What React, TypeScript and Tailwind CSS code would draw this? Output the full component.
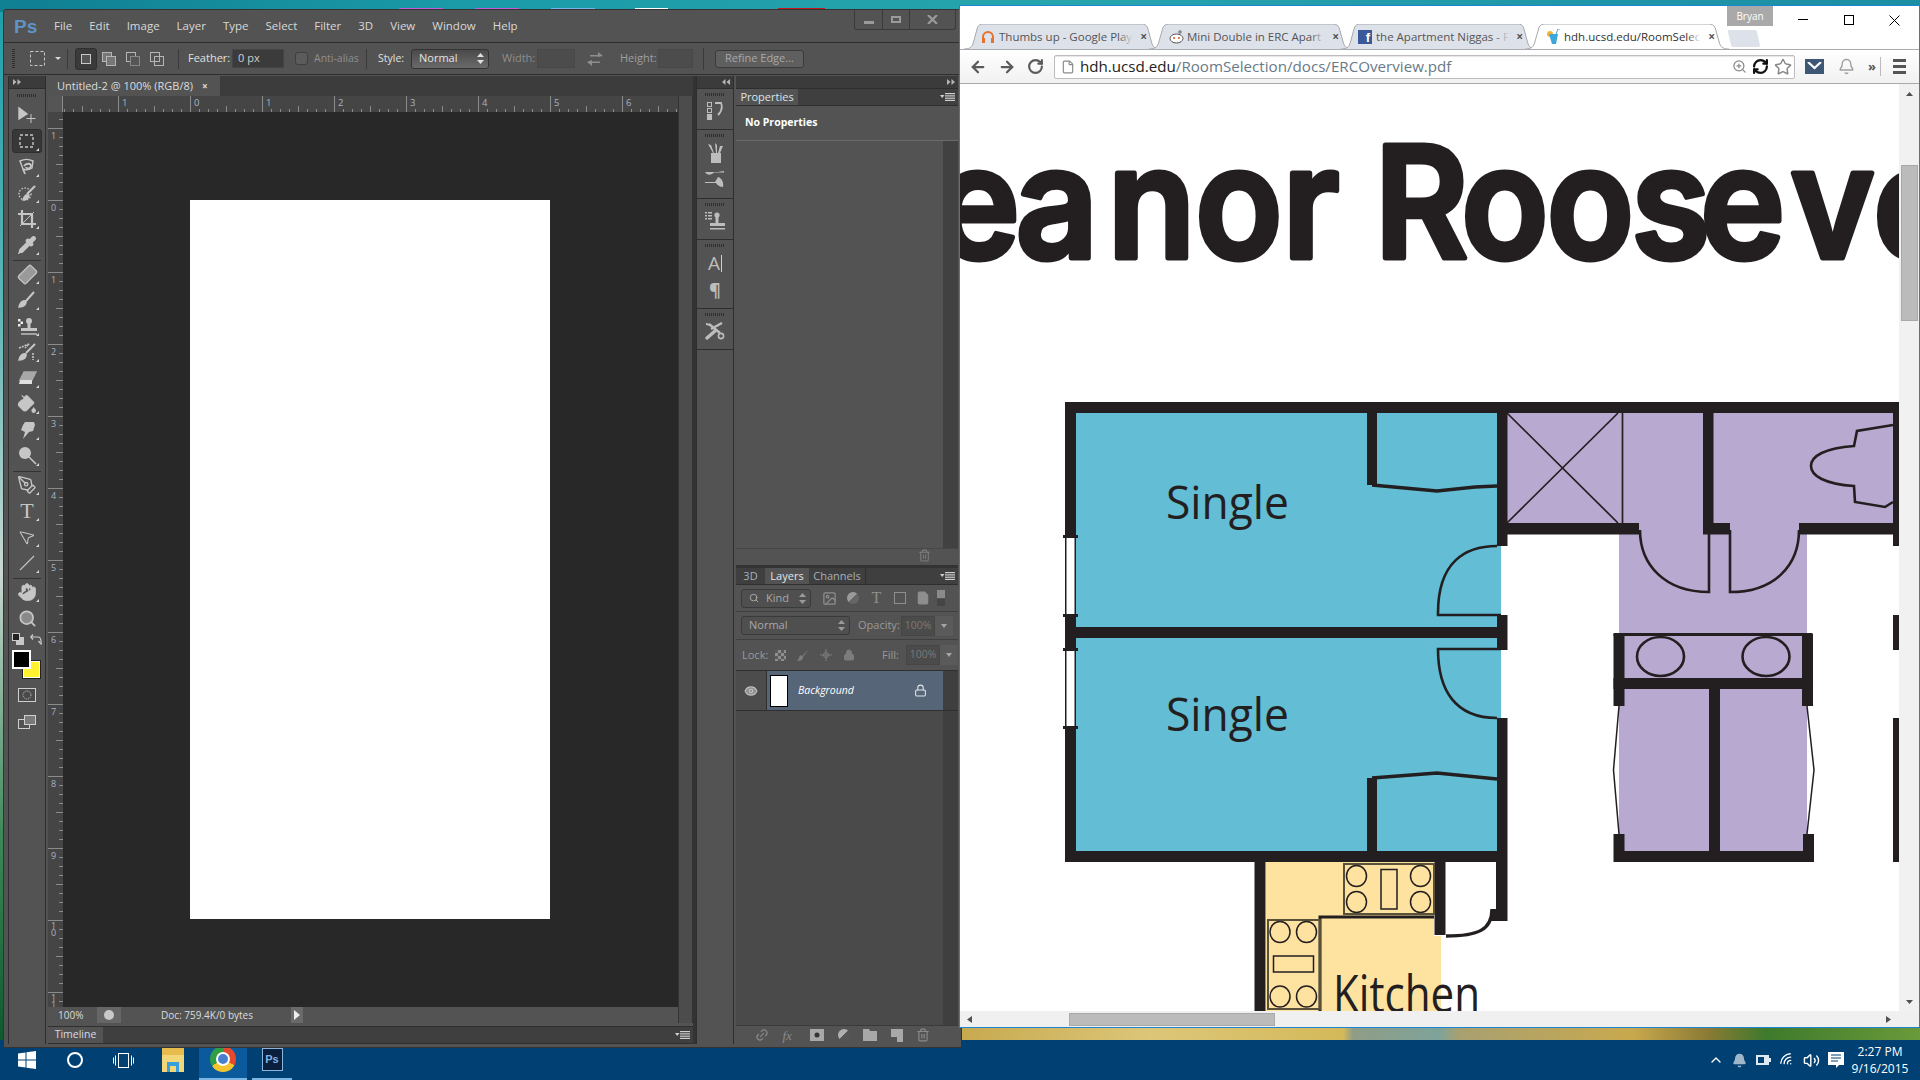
import React from "react";
import {
  ArrowLeft,
  ArrowRight,
  Bandage,
  Bell,
  ChevronUp,
  Eye,
  File,
  Hand,
  Image as ImageIcon,
  Link2,
  Lock,
  MousePointer2,
  PaintBucket,
  PenTool,
  Pipette,
  RefreshCw,
  RotateCw,
  Search,
  Star,
  Trash2,
  Volume2,
  Wifi,
  ZoomIn,
} from "lucide-react";

const MENUS = ["File", "Edit", "Image", "Layer", "Type", "Select", "Filter", "3D", "View", "Window", "Help"];

function Grip({ w = 20 }: { w?: number }) {
  return (
    <svg width={w} height="3" className="mx-auto block">
      {Array.from({ length: Math.floor(w / 2) }).map((_, i) => (
        <rect key={i} x={i * 2} y="0" width="1" height="3" fill="#2f2f2f" />
      ))}
    </svg>
  );
}

function UpDown({ color = "#bdbdbd" }: { color?: string }) {
  return (
    <svg width="7" height="11" viewBox="0 0 7 11" fill={color}>
      <path d="M3.5 0 7 4H0zM3.5 11 0 7h7z" />
    </svg>
  );
}

function DoubleArrow({ left }: { left?: boolean }) {
  return (
    <svg width="8" height="6" viewBox="0 0 8 6" fill="#b5b5b5" className={left ? "rotate-180" : ""}>
      <path d="M0 0l3.5 3L0 6zM4.5 0 8 3 4.5 6z" />
    </svg>
  );
}

function PanelMenu() {
  return (
    <svg width="15" height="8" viewBox="0 0 15 8" fill="#cfcfcf">
      <path d="M0 2h4.5L2.2 5z" />
      <rect x="5" y="0" width="10" height="1.2" />
      <rect x="5" y="2.3" width="10" height="1.2" />
      <rect x="5" y="4.6" width="10" height="1.2" />
      <rect x="5" y="6.8" width="10" height="1.2" />
    </svg>
  );
}

function Tool({ children, corner = true, active }: { children: React.ReactNode; corner?: boolean; active?: boolean }) {
  return (
    <div className="relative flex h-[26px] items-center justify-center">
      {active && <div className="absolute inset-x-[3px] inset-y-px rounded-[3px] border border-[#2e2e2e] bg-[#383838]" />}
      <div className="relative flex h-[22px] w-[22px] items-center justify-center text-[#c6c6c6]">{children}</div>
      {corner && (
        <svg width="3" height="3" className="absolute bottom-[3px] right-[6px]">
          <path d="M3 0v3H0z" fill="#d8d8d8" />
        </svg>
      )}
    </div>
  );
}

function Ic({ children }: { children: React.ReactNode }) {
  return (
    <svg width="22" height="22" viewBox="0 0 22 22" fill="none" stroke="#c6c6c6" strokeWidth="1.4">
      {children}
    </svg>
  );
}

function ToolBar() {
  return (
    <div className="w-[38px] shrink-0 border-x border-[#2e2e2e] bg-[#535353]">
      <div className="flex h-[13px] items-center border-b border-[#2e2e2e] bg-[#3b3b3b] pl-[4px]">
        <DoubleArrow />
      </div>
      <div className="flex h-[13px] items-center">
        <Grip />
      </div>
      <Tool corner={false}>
        <Ic>
          <path d="M3 4v11l8-5z" fill="#c6c6c6" />
          <path d="M15 10v9M10.5 14.5h9" strokeWidth="1" />
        </Ic>
      </Tool>
      <Tool active>
        <Ic>
          <rect x="4" y="5" width="13" height="12" strokeDasharray="3 2" />
        </Ic>
      </Tool>
      <Tool>
        <Ic>
          <path d="M4 5c4-2 9-2 13 0l-1 7c-3 2-7 2-9 1z" />
          <path d="M8 10c2-3 7-3 7 0s-5 3-5 1M7 13l2 5" fill="none" strokeWidth="1.8" />
        </Ic>
      </Tool>
      <Tool>
        <Ic>
          <circle cx="9" cy="12" r="6" strokeDasharray="1.5 1.5" />
          <path d="M19 4 11 12" strokeWidth="2.2" />
          <path d="M7 18c1-4 3-6 6-5 0 3-2 5-6 5z" fill="#c6c6c6" />
        </Ic>
      </Tool>
      <Tool>
        <Ic>
          <path d="M6 2v14h14M2 6h14v14" strokeWidth="2.2" />
          <path d="M4 18 18 4" strokeWidth="1" />
        </Ic>
      </Tool>
      <Tool>
        <Pipette size={20} fill="#c6c6c6" strokeWidth={1.4} />
      </Tool>
      <div className="mx-[4px] h-[3px] border-b border-[#333]" />
      <Tool>
        <Bandage size={21} fill="#9a9a9a" strokeWidth={1.4} className="-rotate-45" />
      </Tool>
      <Tool>
        <Ic>
          <path d="M18 3 10 12" strokeWidth="2" />
          <path d="M3 18c1-4 3-7 7-6 1 3-2 6-7 6z" fill="#c6c6c6" />
        </Ic>
      </Tool>
      <Tool>
        <Ic>
          <rect x="2" y="4" width="2.5" height="2.5" fill="#eee" stroke="none" />
          <rect x="4.5" y="6.5" width="2.5" height="2.5" fill="#eee" stroke="none" />
          <rect x="2" y="9" width="2.5" height="2.5" fill="#eee" stroke="none" />
          <circle cx="13" cy="6" r="3" fill="#c6c6c6" stroke="none" />
          <path d="M13 8v5" strokeWidth="3" />
          <path d="M5 13h16v3H5z" fill="#c6c6c6" stroke="none" />
          <path d="M5 19h16" />
        </Ic>
      </Tool>
      <Tool>
        <Ic>
          <path d="M19 3 10 12" strokeWidth="2" />
          <path d="M3 19c1-4 3-7 7-6 1 3-2 6-7 6z" fill="#c6c6c6" />
          <path d="M3 7 13 3 9 7M17 12v7" strokeWidth="1.6" strokeDasharray="2 1" />
        </Ic>
      </Tool>
      <Tool>
        <Ic>
          <path d="M8 5h12l-4 8H4z" fill="#a8a8a8" stroke="#a8a8a8" />
          <path d="M4 13h12v4H3z" fill="#e0e0e0" stroke="none" />
        </Ic>
      </Tool>
      <Tool>
        <PaintBucket size={20} fill="#c6c6c6" strokeWidth={1.4} />
      </Tool>
      <Tool>
        <Ic>
          <path d="M9 3h9l1 3-2 6-4 1-6 7 2-7-4-2 2-5z" fill="#c6c6c6" stroke="none" />
        </Ic>
      </Tool>
      <Tool>
        <Ic>
          <circle cx="9" cy="8" r="6" fill="#c6c6c6" stroke="none" />
          <path d="m13 12 7 7" strokeWidth="1.6" />
        </Ic>
      </Tool>
      <div className="mx-[4px] h-[3px] border-b border-[#333]" />
      <Tool>
        <PenTool size={20} strokeWidth={1.6} />
      </Tool>
      <Tool>
        <span className="font-['Liberation_Serif',serif] text-[22px] leading-none">T</span>
      </Tool>
      <Tool>
        <MousePointer2 size={18} strokeWidth={1.4} className="rotate-[-8deg]" />
      </Tool>
      <Tool>
        <Ic>
          <path d="M4 18 18 4" strokeWidth="1.1" />
        </Ic>
      </Tool>
      <div className="mx-[4px] h-[3px] border-b border-[#333]" />
      <Tool>
        <Hand size={20} fill="#c6c6c6" strokeWidth={1.2} />
      </Tool>
      <Tool corner={false}>
        <Search size={19} strokeWidth={2.2} fill="#8a8a8a" />
      </Tool>
      <div className="flex h-[16px] items-center justify-between px-[3px]">
        <svg width="12" height="12" viewBox="0 0 12 12">
          <rect x="4" y="4" width="8" height="8" fill="#c8c8c8" />
          <rect x="0.5" y="0.5" width="7" height="7" fill="#222" stroke="#ccc" />
        </svg>
        <svg width="12" height="12" viewBox="0 0 12 12" fill="none" stroke="#ccc" strokeWidth="1.2">
          <path d="M1 4h7c2 0 3 1 3 5M3 1.5 0.8 4 3 6.5M8.5 8l2.5 3 2-3" />
        </svg>
      </div>
      <div className="relative ml-[3px] h-[32px]">
        <div className="absolute left-[10px] top-[13px] h-[19px] w-[19px] border border-[#222] bg-[#fff22f] outline outline-1 -outline-offset-2 outline-white" />
        <div className="absolute left-[0px] top-[3px] h-[19px] w-[19px] border-2 border-white bg-black" />
      </div>
      <div className="mt-[9px] flex justify-center">
        <svg width="18" height="14" viewBox="0 0 18 14" fill="none" stroke="#cfcfcf">
          <rect x="0.5" y="0.5" width="17" height="13" fill="#4a4a4a" />
          <circle cx="9" cy="7" r="4" strokeDasharray="1 1" />
        </svg>
      </div>
      <div className="mt-[13px] flex justify-center">
        <svg width="18" height="14" viewBox="0 0 18 14" fill="none" stroke="#cfcfcf">
          <rect x="0.5" y="4.5" width="11" height="9" />
          <rect x="6.5" y="0.5" width="11" height="9" fill="#7a7a7a" />
        </svg>
      </div>
    </div>
  );
}

function TopRuler() {
  const ticks = Array.from({ length: 70 }).map((_, i) => i * 9 + 1);
  return (
    <svg width="615" height="16" className="block">
      {ticks.map((x) => {
        const fromZero = Math.round((x - 127) / 9);
        const inch = ((fromZero % 8) + 8) % 8 === 0;
        const half = ((fromZero % 4) + 4) % 4 === 0;
        return <rect key={x} x={x} y={inch ? 0 : half ? 10 : 13} width="1" height={inch ? 16 : half ? 6 : 3} fill="#8b8b8b" />;
      })}
      {[1, 0, 1, 2, 3, 4, 5, 6].map((n, i) => (
        <text key={i} x={56 + i * 72 + 3} y="10" fontSize="9.5" fill="#a6b4c4">
          {n}
        </text>
      ))}
    </svg>
  );
}

function LeftRuler() {
  const labels = ["1", "0", "1", "2", "3", "4", "5", "6", "7", "8", "9", "10", "11"];
  return (
    <svg width="15" height="896" className="block">
      {Array.from({ length: 100 }).map((_, i) => {
        const y = 16 + (i - 1) * 9;
        const inch = (i - 1) % 8 === 0;
        const half = (i - 1) % 4 === 0;
        return y < 0 ? null : <rect key={i} x={inch ? 0 : half ? 8 : 11} y={y} width={inch ? 15 : half ? 7 : 4} height="1" fill="#8b8b8b" />;
      })}
      {labels.map((l, i) => (
        <text key={i} y={16 + i * 72 + (l.length > 1 ? 9 : 11)} fontSize="9" fill="#a6b4c4">
          {l.split("").map((c, j) => (
            <tspan key={j} x="3" dy={j === 0 ? 0 : 7}>
              {c}
            </tspan>
          ))}
        </text>
      ))}
    </svg>
  );
}

function DocColumn() {
  return (
    <div className="flex min-w-0 w-[645px] shrink-0 flex-col">
      <div className="flex h-[20px] shrink-0 bg-[#3c3c3c]">
        <div className="flex w-[172px] items-center gap-[9px] bg-[#535353] pl-[9px] text-[11px] text-[#dcdcdc]">
          <span>Untitled-2 @ 100% (RGB/8)</span>
          <span className="text-[10px] font-bold leading-none">×</span>
        </div>
      </div>
      <div className="flex h-[927px] shrink-0">
        <div className="flex w-[630px] flex-col overflow-hidden">
          <div className="flex h-[16px] shrink-0 bg-[#454545]">
            <div className="w-[15px] border-r border-[#8b8b8b] bg-[#555]" />
            <TopRuler />
          </div>
          <div className="flex min-h-0 flex-1">
            <div className="w-[15px] shrink-0 overflow-hidden bg-[#454545]">
              <LeftRuler />
            </div>
            <div className="min-w-0 flex-1 overflow-hidden bg-[#282828] pl-[127px] pt-[88px]">
              <div className="h-[719px] w-[360px] bg-white" />
            </div>
          </div>
          <div className="flex h-[16px] shrink-0 items-center bg-[#535353] text-[10px] text-[#dcdcdc]">
            <span className="w-[49px] pl-[10px]">100%</span>
            <div className="flex h-full w-[24px] items-center justify-center bg-[#666]">
              <div className="h-[10px] w-[10px] rounded-full bg-[#c8c8c8]" />
            </div>
            <span className="w-[170px] pl-[40px]">Doc: 759.4K/0 bytes</span>
            <div className="flex h-full w-[12px] items-center justify-center bg-[#6a6a6a]">
              <svg width="6" height="10">
                <path d="M0 0l6 5-6 5z" fill="#eee" />
              </svg>
            </div>
          </div>
        </div>
        <div className="w-[15px] border-x border-[#333] bg-[#4c4c4c]" />
      </div>
      <div className="mt-[3px] flex h-[18px] shrink-0 items-stretch border-y border-[#2f2f2f] bg-[#3f3f3f]">
        <div className="flex w-[55px] items-center justify-center bg-[#535353] text-[10.5px] text-[#d4dce4]">Timeline</div>
        <div className="flex flex-1 items-center justify-end pr-[3px]">
          <PanelMenu />
        </div>
      </div>
    </div>
  );
}

function DockGroup({ children, h }: { children: React.ReactNode; h: number }) {
  return (
    <div className={`border-b border-[#2e2e2e] pt-[4px] ${h === 40 ? "h-[41px]" : "h-[69px]"}`}>
      <Grip />
      <div className="flex flex-col items-center gap-[7px] pt-[6px] text-[#bdbdbd]">{children}</div>
    </div>
  );
}

function Dock() {
  return (
    <div className="w-[38px] shrink-0 border-x border-[#2e2e2e] bg-[#535353]">
      <div className="flex h-[13px] items-center justify-end border-b border-[#2e2e2e] bg-[#3b3b3b] pr-[3px]">
        <DoubleArrow left />
      </div>
      <DockGroup h={40}>
        <svg width="16" height="18" viewBox="0 0 16 18" fill="none" stroke="#bdbdbd">
          <rect x="0.5" y="0.5" width="4" height="4" />
          <rect x="0.5" y="6.5" width="4" height="4" />
          <rect x="0.5" y="12.5" width="4" height="5" fill="#bdbdbd" />
          <path d="M8 1h6c2 5 0 9-3 12" strokeWidth="1.8" />
        </svg>
      </DockGroup>
      <DockGroup h={69}>
        <svg width="18" height="20" viewBox="0 0 18 20" fill="#bdbdbd">
          <rect x="5" y="10" width="10" height="10" />
          <path d="M7 10 2 1l3 1 3 8zM10 10 9 0l2 2 0 8zM12 10l2-7 3 0-3 7z" />
        </svg>
        <svg width="20" height="18" viewBox="0 0 20 18" fill="#bdbdbd">
          <path d="M0 2h9c3 0 5 0 10-1v1.5H9C5 6 2 5 0 2zM0 12h10l3-5c4 1 6 6 5 10-3 0-6-2-7-4H0z" />
        </svg>
      </DockGroup>
      <DockGroup h={40}>
        <svg width="20" height="18" viewBox="0 0 20 18" fill="#bdbdbd">
          <path d="M0 0h2v1.4H0zM0 3h2v1.4H0zM0 6h2v1.4H0zM3 0h4v1.4H3zM3 3h4v1.4H3zM3 6h4v1.4H3z" />
          <circle cx="12" cy="3" r="2.6" />
          <rect x="10.5" y="4" width="3" height="7" />
          <rect x="5" y="11" width="15" height="3" />
          <rect x="5" y="16" width="15" height="1.5" />
        </svg>
      </DockGroup>
      <DockGroup h={69}>
        <span className="flex h-[20px] items-center text-[19px] leading-none text-[#bdbdbd]">
          A<span className="ml-px inline-block h-[17px] w-px bg-[#cfcfcf]" />
        </span>
        <span className="flex h-[20px] items-center text-[18px] font-bold leading-none text-[#bdbdbd]">¶</span>
      </DockGroup>
      <DockGroup h={40}>
        <svg width="20" height="18" viewBox="0 0 20 18" fill="none" stroke="#bdbdbd">
          <path d="M6 7 17 1M4 2 15 11" strokeWidth="2.4" />
          <path d="M1 2c2 0 3 1 4 1" strokeWidth="2" />
          <path d="M10 9 2 16" strokeWidth="3.4" strokeLinecap="round" />
          <circle cx="16" cy="14" r="2.6" strokeWidth="1.6" />
        </svg>
      </DockGroup>
    </div>
  );
}

function PsSelect({ className, label, muted }: { className: string; label: React.ReactNode; muted?: boolean }) {
  return (
    <div className={`flex items-center justify-between rounded-[3px] border border-[#3a3a3a] bg-[#4f4f4f] pl-[7px] pr-[4px] text-[11px] ${muted ? "text-[#a8a8a8]" : "text-[#d8d8d8]"} ${className}`}>
      {label}
      <UpDown color={muted ? "#9a9a9a" : "#cfcfcf"} />
    </div>
  );
}

function PercentBox() {
  return (
    <div className="flex h-[20px]">
      <div className="flex w-[34px] items-center justify-center border border-[#464646] bg-[#4b4b4b] text-[10.5px] text-[#7a7a7a]">100%</div>
      <div className="flex w-[18px] items-center justify-center bg-[#5a5a5a]">
        <svg width="6" height="4">
          <path d="M0 0h6L3 4z" fill="#a5a5a5" />
        </svg>
      </div>
    </div>
  );
}

function Panels() {
  return (
    <div className="flex w-[222px] shrink-0 flex-col bg-[#535353]">
      <div className="flex h-[13px] shrink-0 items-center justify-end border-b border-[#2e2e2e] bg-[#3b3b3b] pr-[3px]">
        <DoubleArrow />
      </div>
      <div className="flex h-[17px] shrink-0 border-b border-[#2f2f2f] bg-[#3f3f3f]">
        <div className="flex w-[62px] items-center justify-center bg-[#535353] text-[11px] text-[#dbe3ea]">Properties</div>
        <div className="flex flex-1 items-center justify-end pr-[3px]">
          <PanelMenu />
        </div>
      </div>
      <div className="flex h-[35px] shrink-0 items-center border-b border-[#6a6a6a] pl-[9px] text-[10.5px] font-bold text-white">No Properties</div>
      <div className="flex h-[407px] shrink-0">
        <div className="flex-1" />
        <div className="w-[15px] bg-[#414141]" />
      </div>
      <div className="flex h-[17px] shrink-0 items-start justify-end border-t border-[#474747] pr-[27px]">
        <Trash2 size={13} color="#7c7c7c" />
      </div>
      <div className="h-[3px] shrink-0 bg-[#333]" />
      <div className="flex h-[17px] shrink-0 border-b border-[#2f2f2f] bg-[#3f3f3f] text-[11px] text-[#a7b0b8]">
        <div className="flex w-[29px] items-center justify-center">3D</div>
        <div className="flex w-[44px] items-center justify-center bg-[#535353] text-[#e0e6ea]">Layers</div>
        <div className="flex w-[57px] items-center justify-center border-r border-[#2f2f2f]">Channels</div>
        <div className="flex flex-1 items-center justify-end pr-[3px]">
          <PanelMenu />
        </div>
      </div>
      <div className="flex h-[27px] shrink-0 items-center border-b border-[#3f3f3f] pl-[5px] text-[#8e8e8e]">
        <PsSelect
          className="h-[19px] w-[70px]"
          muted
          label={
            <span className="flex items-center gap-[7px]">
              <Search size={10} strokeWidth={2.4} />
              Kind
            </span>
          }
        />
        <div className="ml-[11px] flex items-center gap-[10px]">
          <ImageIcon size={15} />
          <div className="h-[12px] w-[12px] rounded-full bg-[linear-gradient(135deg,#9a9a9a_50%,#666_50%)]" />
          <span className="w-[15px] text-center font-['Liberation_Serif',serif] text-[16px] leading-none">T</span>
          <div className="h-[12px] w-[12px] border border-[#8e8e8e]" />
          <File size={14} fill="#8e8e8e" />
        </div>
        <div className="ml-[7px] flex h-[16px] w-[8px] flex-col gap-px">
          <div className="flex-1 bg-[#8a8a8a]" />
          <div className="flex-1 bg-[#454545]" />
        </div>
      </div>
      <div className="flex h-[28px] shrink-0 items-center border-b border-[#3f3f3f] pl-[5px] text-[11px] text-[#9a9a9a]">
        <PsSelect className="h-[19px] w-[109px]" muted label="Normal" />
        <span className="ml-[8px] w-[43px]">Opacity:</span>
        <PercentBox />
      </div>
      <div className="flex h-[31px] shrink-0 items-center border-b border-[#2f2f2f] pl-[6px] text-[11px] text-[#9a9a9a]">
        <span className="w-[33px]">Lock:</span>
        <div className="flex items-center gap-[11px] text-[#7c7c7c]">
          <div className="h-[11px] w-[11px] bg-[repeating-conic-gradient(#8e8e8e_0_25%,#5a5a5a_0_50%)] bg-[length:6px_6px]" />
          <svg width="12" height="12" viewBox="0 0 12 12" fill="#7c7c7c">
            <path d="M12 0 5 7 3 6C2 8 2 10 0 12c4 0 6-1 6-4z" />
          </svg>
          <svg width="12" height="12" viewBox="0 0 12 12" fill="none" stroke="#7c7c7c">
            <path d="M6 0v12M0 6h12" />
            <circle cx="6" cy="6" r="2.5" />
          </svg>
          <Lock size={12} fill="#7c7c7c" />
        </div>
        <span className="ml-auto mr-[7px]">Fill:</span>
        <PercentBox />
      </div>
      <div className="flex h-[40px] shrink-0 border-b border-[#2f2f2f]">
        <div className="flex w-[31px] items-center justify-center border-r border-[#2f2f2f] bg-[#4c4c4c]">
          <Eye size={14} color="#c0c0c0" fill="#8f8f8f" />
        </div>
        <div className="flex w-[176px] items-center bg-[#576578] pl-[3px] text-white">
          <div className="h-[32px] w-[18px] border border-black bg-white" />
          <span className="ml-[10px] text-[10.5px] italic">Background</span>
          <Lock size={13} color="#dfe4ea" className="ml-auto mr-[16px]" />
        </div>
        <div className="flex-1 bg-[#3f3f3f]" />
      </div>
      <div className="flex min-h-0 flex-1">
        <div className="flex-1 bg-[#4a4a4a]" />
        <div className="w-[15px] bg-[#3f3f3f]" />
      </div>
      <div className="flex h-[19px] shrink-0 items-center gap-[13.5px] border-t border-[#3a3a3a] pl-[19px] text-[#8a8a8a]">
        <Link2 size={14} className="-rotate-45" />
        <span className="w-[14px] font-['Liberation_Serif',serif] text-[13px] italic leading-none">fx</span>
        <svg width="14" height="12">
          <rect width="14" height="12" fill="#a8a8a8" />
          <circle cx="7" cy="6" r="2.5" fill="#333" />
        </svg>
        <div className="h-[12px] w-[12px] rounded-full bg-[linear-gradient(135deg,#b0b0b0_50%,#555_50%)]" />
        <svg width="14" height="12">
          <path d="M0 0h6l1 2h7v10H0z" fill="#a8a8a8" />
        </svg>
        <svg width="12" height="13">
          <path d="M0 0h12v13H6V8H0z" fill="#a8a8a8" />
        </svg>
        <Trash2 size={14} />
      </div>
    </div>
  );
}

function OptionsBar() {
  return (
    <div className="flex h-[33px] shrink-0 items-center border-y border-[#2e2e2e] bg-[#535353] text-[11px]">
      <div className="ml-[8px] h-[20px] w-[3px] bg-[repeating-linear-gradient(#2f2f2f_0_1px,transparent_1px_2px)]" />
      <svg width="16" height="15" className="ml-[15px]" fill="none" stroke="#c8c8c8" strokeDasharray="3 2">
        <rect x="0.5" y="0.5" width="14" height="14" />
      </svg>
      <svg width="6" height="3" className="ml-[9px]">
        <path d="M0 0h6L3 3z" fill="#d8d8d8" />
      </svg>
      <div className="ml-[6px] h-[20px] w-px bg-[#3a3a3a]" />
      <div className="ml-[7px] flex h-[22px] w-[22px] items-center justify-center rounded-[3px] border border-[#2f2f2f] bg-[#3a3a3a]">
        <div className="h-[10px] w-[10px] border border-[#c8c8c8] bg-[#555]" />
      </div>
      <svg width="14" height="14" className="ml-[5px]" fill="none" stroke="#b5b5b5">
        <rect x="0.5" y="0.5" width="9" height="9" fill="#777" />
        <rect x="4.5" y="4.5" width="9" height="9" fill="#777" />
      </svg>
      <svg width="14" height="14" className="ml-[10px]" fill="none" stroke="#b5b5b5">
        <rect x="0.5" y="0.5" width="9" height="9" />
        <rect x="4.5" y="4.5" width="9" height="9" fill="#555" stroke="#888" />
      </svg>
      <svg width="14" height="14" className="ml-[10px]" fill="none" stroke="#b5b5b5">
        <rect x="0.5" y="0.5" width="9" height="9" />
        <rect x="4.5" y="4.5" width="9" height="9" />
      </svg>
      <div className="ml-[14px] h-[20px] w-px bg-[#3a3a3a]" />
      <span className="ml-[9px] w-[44px] text-[#e0e0e0]">Feather:</span>
      <div className="flex h-[19px] w-[52px] items-center border border-[#454545] bg-[#3b3b3b] pl-[5px] text-[#cfcfcf]">0 px</div>
      <div className="ml-[11px] h-[13px] w-[13px] rounded-[3px] border border-[#3f3f3f] bg-[#5c5c5c]" />
      <span className="ml-[6px] w-[52px] text-[10.5px] text-[#8e8e8e]">Anti-alias</span>
      <div className="h-[20px] w-px bg-[#3a3a3a]" />
      <span className="ml-[11px] w-[33px] text-[10.5px] text-[#e0e0e0]">Style:</span>
      <div className="flex h-[20px] w-[78px] items-center justify-between rounded-[3px] border border-[#333] bg-[linear-gradient(#4a4a4a,#6a6a6a)] px-[7px] pr-[4px] text-[#e4e4e4]">
        Normal
        <UpDown color="#e0e0e0" />
      </div>
      <span className="ml-[13px] w-[35px] text-[#8e8e8e]">Width:</span>
      <div className="h-[19px] w-[38px] border border-[#484848] bg-[#4c4c4c]" />
      <svg width="16" height="14" viewBox="0 0 16 14" fill="#8e8e8e" className="ml-[12px]">
        <path d="M3 3h8V0l5 4-5 1V4.5H3zM13 9.5H5V8L0 10l5 4v-3h8z" />
      </svg>
      <span className="ml-[17px] w-[38px] text-[#9e9e9e]">Height:</span>
      <div className="h-[19px] w-[35px] border border-[#484848] bg-[#4c4c4c]" />
      <div className="ml-[10px] h-[22px] w-px bg-[#3a3a3a]" />
      <div className="ml-[11px] flex h-[18px] w-[89px] items-center justify-center rounded-[3px] border border-[#3a3a3a] bg-[#5f5f5f] text-[#a8a8a8]">Refine Edge...</div>
    </div>
  );
}

function PhotoshopWindow() {
  return (
    <div className="absolute left-[3px] top-[9px] z-10 flex h-[1039px] w-[959px] flex-col rounded-tl-[3px] border border-[#333] bg-[#535353] pb-[3px]">
      <div className="flex h-[32px] shrink-0 items-start justify-between">
        <div className="flex h-full items-center text-[11.5px] text-[#d8d8d8]">
          <span className="ml-[10px] w-[40px] font-['Liberation_Sans',sans-serif] text-[19px] font-bold leading-none text-[#5f93c7]">Ps</span>
          <div className="flex gap-[17px]">
            {MENUS.map((m) => (
              <span key={m}>{m}</span>
            ))}
          </div>
        </div>
        <div className="mr-[5px] flex h-[20px] w-[102px] rounded-b-[3px] border border-t-0 border-[#3a3a3a]">
          <div className="flex w-[28px] items-end justify-center border-r border-[#3a3a3a] pb-[5px]">
            <div className="h-[3px] w-[10px] bg-[#9a9a9a]" />
          </div>
          <div className="flex w-[27px] items-center justify-center border-r border-[#3a3a3a]">
            <div className="h-[7px] w-[10px] border-2 border-[#9a9a9a]" />
          </div>
          <div className="flex flex-1 items-center justify-center">
            <svg width="11" height="9" viewBox="0 0 11 9" stroke="#9a9a9a" strokeWidth="2.2">
              <path d="M1 0l9 9M10 0 1 9" />
            </svg>
          </div>
        </div>
      </div>
      <OptionsBar />
      <div className="flex min-h-0 flex-1 pl-[4px] pr-[3px] pt-px">
        <ToolBar />
        <div className="w-[2px] shrink-0" />
        <DocColumn />
        <div className="w-[3px] shrink-0 bg-[#333]" />
        <Dock />
        <div className="w-[2px] shrink-0" />
        <Panels />
      </div>
    </div>
  );
}

function ChromeTab({ title, icon, active, className }: { title: string; icon: React.ReactNode; active?: boolean; className: string }) {
  return (
    <div className={`relative flex h-[25px] items-center pr-[14px] ${className} ${active ? "z-10" : ""}`}>
      <svg viewBox="0 0 192 25" preserveAspectRatio="none" className="absolute inset-0 h-full w-full">
        <path
          d="M0 25c7 0 8-3 9-6L13 4c1-3 3-4 6-4h154c3 0 5 1 6 4l4 15c1 3 2 6 9 6"
          fill={active ? "#ffffff" : "#dde1e9"}
          stroke="#a7a9ac"
          vectorEffect="non-scaling-stroke"
        />
      </svg>
      <div className="relative flex h-[16px] w-[16px] shrink-0 items-center justify-center">{icon}</div>
      <div className="relative ml-[3px] min-w-0 flex-1 overflow-hidden whitespace-nowrap text-[11.5px] leading-[14px] text-[#555]">
        <span className={active ? "text-[#333]" : ""}>{title}</span>
        <div className={`absolute inset-y-0 right-0 w-[14px] ${active ? "bg-gradient-to-r from-transparent to-white" : "bg-gradient-to-r from-transparent to-[#dde1e9]"}`} />
      </div>
      <span className="relative ml-[7px] text-[12px] font-bold leading-none text-[#555]">×</span>
    </div>
  );
}

function FloorPlan() {
  const wall = "#231f20";
  const blue = "#63bdd4";
  const purple = "#b8a9d0";
  const yellow = "#fde2a0";
  return (
    <svg viewBox="960 84 939 927" width="939" height="927" className="block shrink-0">
      <g transform="translate(0 258) scale(0.93 1)" fontFamily="Inter, sans-serif" fontWeight="600" fontSize="155" fill={wall} stroke={wall} strokeWidth="5" strokeLinejoin="round">
        <text x={[1005, 1092, 1191, 1285, 1379].join(" ")}>eanor</text>
        <text x={[1478, 1571, 1663, 1754, 1828, 1925, 2014].join(" ")}>Rooseve</text>
      </g>

      {/* rooms */}
      <path d="M1076 413H1497V546H1501V615H1497V627H1076Z" fill={blue} />
      <path d="M1076 638H1497V650H1501V718H1497V851H1076Z" fill={blue} />
      <rect x="1507" y="413" width="196" height="110" fill={purple} />
      <rect x="1713" y="413" width="180" height="110" fill={purple} />
      <rect x="1619" y="523" width="188" height="112" fill={purple} />
      <rect x="1619" y="636" width="188" height="215" fill={purple} />
      <path d="M1266 862H1434V936H1441V1011H1266Z" fill={yellow} />

      {/* walls */}
      <g fill={wall}>
        <rect x="1065" y="402" width="834" height="11" />
        <rect x="1065" y="402" width="11" height="133" />
        <rect x="1063" y="535" width="15" height="3" />
        <rect x="1065" y="538" width="1.5" height="77" />
        <rect x="1074.5" y="538" width="1.5" height="77" />
        <rect x="1063" y="614" width="15" height="3" />
        <rect x="1065" y="617" width="11" height="33" />
        <rect x="1063" y="648" width="15" height="3" />
        <rect x="1065" y="651" width="1.5" height="75" />
        <rect x="1074.5" y="651" width="1.5" height="75" />
        <rect x="1063" y="726" width="15" height="3" />
        <rect x="1065" y="729" width="11" height="133" />
        <rect x="1065" y="627" width="442" height="11" />
        <rect x="1065" y="851" width="442" height="11" />
        <rect x="1497" y="402" width="10.5" height="144" />
        <rect x="1497" y="615" width="10.5" height="35" />
        <rect x="1497" y="718" width="10.5" height="144" />
        <rect x="1367" y="413" width="10" height="72" />
        <rect x="1367" y="778" width="10" height="73" />
        <rect x="1497" y="523" width="142" height="11.5" />
        <rect x="1703" y="402" width="10.5" height="132" />
        <rect x="1703" y="523" width="27" height="11.5" />
        <rect x="1799" y="523" width="94" height="11.5" />
        <rect x="1893" y="402" width="6" height="144" />
        <rect x="1893" y="615" width="6" height="35" />
        <rect x="1893" y="718" width="6" height="144" />
        <rect x="1613.5" y="634" width="11" height="72" />
        <rect x="1802" y="634" width="11" height="72" />
        <rect x="1613.5" y="633" width="199" height="3" />
        <rect x="1613.5" y="678" width="199" height="11" />
        <rect x="1709" y="689" width="11" height="162" />
        <rect x="1613.5" y="851" width="200.5" height="11" />
        <rect x="1613.5" y="834" width="11" height="17" />
        <rect x="1803" y="834" width="11" height="17" />
        <rect x="1254.5" y="862" width="11" height="149" />
        <rect x="1434.5" y="862" width="11" height="73" />
        <rect x="1496" y="862" width="11.5" height="59" />
        <rect x="1491" y="909" width="16" height="12" />
      </g>

      {/* door swings and fixtures */}
      <g fill="none" stroke={wall} strokeWidth="2.6">
        <path d="M1372 485 1437 491 1475 487 1497 486" strokeWidth="3.4" />
        <path d="M1372 778 1437 773 1497 779" strokeWidth="3.4" />
        <path d="M1497 546C1465 546 1438 562 1438 613V615H1501" />
        <path d="M1501 649H1438C1438 690 1455 718 1497 718" />
        <path d="M1640 530C1640 565 1665 592 1709 592V534" />
        <path d="M1799 530C1799 565 1775 592 1730 592V530" />
        <path d="M1893 425 1857 431 1854 446C1825 448 1811 456 1811 466S1825 484 1854 486L1855 502 1885 507 1893 502" />
        <path d="M1507 413 1618 523M1618 413 1507 523M1622.5 413V523" strokeWidth="1.7" />
        <ellipse cx="1660.5" cy="656.5" rx="23.5" ry="19.5" />
        <ellipse cx="1766" cy="656.5" rx="23.5" ry="19.5" />
        <path d="M1619 706 1613.5 770 1619 834M1807 706 1814 770 1807 834" strokeWidth="1.5" />
        <path d="M1446 936C1478 936 1492 930 1492 909" strokeWidth="3.4" />
        <path d="M1434 917H1320V1011" strokeWidth="3" />
      </g>
      <g fill="none" stroke={wall} strokeWidth="1.5">
        <rect x="1344" y="864" width="90" height="50" stroke="#5a5238" strokeWidth="2" />
        <ellipse cx="1356.5" cy="876" rx="10" ry="10.5" />
        <ellipse cx="1356.5" cy="902" rx="10" ry="10.5" />
        <ellipse cx="1420.5" cy="876" rx="10" ry="10.5" />
        <ellipse cx="1420.5" cy="902" rx="10" ry="10.5" />
        <rect x="1381" y="869.5" width="16" height="39.5" />
        <rect x="1268" y="920" width="52" height="89" stroke="#5a5238" strokeWidth="2" />
        <ellipse cx="1280" cy="932" rx="10" ry="10.5" />
        <ellipse cx="1306.5" cy="932" rx="10" ry="10.5" />
        <ellipse cx="1280" cy="996.5" rx="10" ry="10.5" />
        <ellipse cx="1306.5" cy="996.5" rx="10" ry="10.5" />
        <rect x="1273.5" y="956" width="40" height="16" />
      </g>
      <g fontFamily="'Open Sans', sans-serif" fill={wall}>
        <text x="1166" y="519" fontSize="46" textLength="123" lengthAdjust="spacingAndGlyphs">Single</text>
        <text x="1166" y="731" fontSize="46" textLength="123" lengthAdjust="spacingAndGlyphs">Single</text>
        <text x="1333" y="1012" fontSize="52" textLength="147" lengthAdjust="spacingAndGlyphs">Kitchen</text>
      </g>
    </svg>
  );
}

function ChromeWindow() {
  return (
    <div className="absolute left-[959px] top-[5px] z-20 flex h-[1023px] w-[961px] flex-col overflow-hidden border-x border-y border-[#1a86d0] bg-white">
      <div className="relative h-[43px] shrink-0">
        <div className="absolute left-[767px] top-0 flex h-[20px] w-[46px] items-center justify-center bg-[#a9a9a9] text-[10px] text-white">Bryan</div>
        <div className="absolute left-[838px] top-[13px] h-px w-[10px] bg-black" />
        <div className="absolute left-[884px] top-[9px] h-[10px] w-[10px] border border-black" />
        <svg width="11" height="11" className="absolute left-[929px] top-[9px]" stroke="black">
          <path d="M0.5 0.5l10 10M10.5 0.5l-10 10" />
        </svg>
        <div className="absolute bottom-0 left-[4px] flex">
          <ChromeTab
            className="w-[197px] pl-[16px]"
            title="Thumbs up - Google Play"
            icon={
              <svg width="14" height="14" viewBox="0 0 14 14" fill="none" stroke="#e5722d" strokeWidth="2">
                <path d="M2 10V7a5 5 0 0 1 10 0v3" />
                <rect x="1" y="8" width="3" height="5" fill="#e5722d" stroke="none" />
                <rect x="10" y="8" width="3" height="5" fill="#e5722d" stroke="none" />
              </svg>
            }
          />
          <ChromeTab
            className="-ml-[12px] w-[204px] pl-[19px]"
            title="Mini Double in ERC Apart"
            icon={
              <svg width="15" height="14" viewBox="0 0 15 14">
                <ellipse cx="7.5" cy="8.5" rx="6.5" ry="4.5" fill="#fff" stroke="#555" />
                <circle cx="5" cy="8" r="1" fill="#e5501e" />
                <circle cx="10" cy="8" r="1" fill="#e5501e" />
                <circle cx="11" cy="2" r="1.2" fill="#fff" stroke="#555" />
              </svg>
            }
          />
          <ChromeTab
            className="-ml-[12px] w-[196px] pl-[16px]"
            title="the Apartment Niggas - F"
            icon={
              <div className="flex h-[14px] w-[14px] items-end justify-end bg-[#3b5998] pr-[2px] font-['Liberation_Sans',sans-serif] text-[13px] font-bold leading-none text-white">f</div>
            }
          />
          <ChromeTab
            active
            className="-ml-[12px] w-[204px] pl-[20px]"
            title="hdh.ucsd.edu/RoomSelec"
            icon={
              <svg width="15" height="15" viewBox="0 0 15 15">
                <circle cx="4" cy="5" r="3" fill="#f6b530" />
                <path d="M3 5h9l-2 10H6z" fill="#3da7dc" />
                <path d="M10 5l2-5h2" stroke="#3da7dc" fill="none" />
              </svg>
            }
          />
          <svg width="33" height="17" viewBox="0 0 33 17" className="-ml-[1px] mt-[6px]">
            <path d="M1 0h25c2 0 3 1 3 2l3 13c0 1-1 2-2 2H6c-2 0-3-1-3-2L0 2c0-1 0-2 1-2z" fill="#dde1e9" />
          </svg>
        </div>
      </div>
      <div className="flex h-[35px] shrink-0 items-center border-y border-[#a9abae] bg-[linear-gradient(#ffffff,#f1f1f1)] pl-[9px] text-[#5a5a5a]">
        <ArrowLeft size={18} strokeWidth={3} />
        <ArrowRight size={18} strokeWidth={3} className="ml-[11px]" />
        <RotateCw size={17} strokeWidth={3} className="ml-[11px]" />
        <div className="ml-[10px] flex h-[24px] w-[741px] items-center rounded-[2px] border border-[#bdbdbd] bg-white pl-[6px] pr-[2px] shadow-[inset_0_1px_1px_#e5e5e5]">
          <File size={14} color="#8a8a8a" />
          <span className="ml-[5px] text-[15.15px] leading-none">
            <span className="text-[#222]">hdh.ucsd.edu</span>
            <span className="text-[#687a88]">/RoomSelection/docs/ERCOverview.pdf</span>
          </span>
          <ZoomIn size={15} color="#888" className="ml-auto" />
          <RefreshCw size={17} color="#111" strokeWidth={3.2} className="ml-[5px]" />
          <Star size={18} color="#888" className="ml-[5px]" />
        </div>
        <div className="ml-[10px] flex h-[15px] w-[19px] items-center justify-center bg-[#3f5777]">
          <svg width="15" height="10" viewBox="0 0 15 10" fill="none" stroke="white" strokeWidth="2.2">
            <path d="M1 0l6.5 6L14 0" />
          </svg>
        </div>
        <Bell size={17} color="#a0a0a0" className="ml-[14px]" />
        <span className="ml-[13px] text-[13px] font-bold leading-none text-[#555]">»</span>
        <div className="ml-[4px] h-[19px] w-px bg-[#bbb]" />
        <div className="ml-[12px] flex w-[13px] flex-col gap-[3px]">
          <div className="h-[3px] bg-[#555]" />
          <div className="h-[3px] bg-[#555]" />
          <div className="h-[3px] bg-[#555]" />
        </div>
      </div>
      <div className="flex min-h-0 flex-1">
        <FloorPlan />
        <div className="flex w-[20px] shrink-0 flex-col items-center bg-[#f1f1f1]">
          <svg width="7" height="4" className="mt-[8px]">
            <path d="M3.5 0 7 4H0z" fill="#505050" />
          </svg>
          <div className="mt-[69px] h-[156px] w-[17px] border border-[#a9a9a9] bg-[#bbbbbb]" />
          <svg width="7" height="4" className="mb-[7px] mt-auto">
            <path d="M0 0h7L3.5 4z" fill="#505050" />
          </svg>
        </div>
      </div>
      <div className="flex h-[16px] shrink-0 items-center bg-[#f0f0f0]">
        <svg width="5" height="7" className="ml-[7px]">
          <path d="M5 0v7L0 3.5z" fill="#505050" />
        </svg>
        <div className="ml-[97px] h-[13px] w-[206px] border border-[#a9a9a9] bg-[#bbbbbb]" />
        <svg width="5" height="7" className="ml-auto mr-[28px]">
          <path d="M0 0v7l5-3.5z" fill="#505050" />
        </svg>
      </div>
    </div>
  );
}

function Taskbar() {
  return (
    <div className="relative flex h-[40px] shrink-0 items-center bg-[#004073] text-white">
      <svg width="18" height="18" viewBox="0 0 18 18" fill="white" className="ml-[18px]">
        <path d="M0 2.5 7.5 1.5V8.5H0zM8.5 1.3 18 0V8.5H8.5zM0 9.5H7.5V16.5L0 15.5zM8.5 9.5H18V18L8.5 16.7z" />
      </svg>
      <div className="ml-[31px] h-[16px] w-[16px] rounded-full border-2 border-white" />
      <svg width="21" height="15" viewBox="0 0 21 15" fill="none" stroke="white" className="ml-[30px]">
        <rect x="5.5" y="0.5" width="10" height="14" />
        <path d="M2.5 2.5v10M18.5 2.5v10M0.5 4.5v6M20.5 4.5v6" />
      </svg>
      <svg width="22" height="24" viewBox="0 0 22 24" className="ml-[28px]">
        <path d="M0 0h22v24H0z" fill="#f3d678" />
        <path d="M0 0h22v7H0z" fill="#e8bc4c" />
        <path d="M5 14h12v10h-3v-6H8v6H5z" fill="#35a0dd" />
      </svg>
      <div className="ml-[15px] flex h-full w-[48px] items-center justify-center border-b-2 border-[#7cb6e3] bg-[#0a5a9c]">
        <div className="h-[26px] w-[26px] rounded-full bg-[conic-gradient(#e7492f_0_33%,#f4c430_33%_66%,#2f9e44_66%)] p-[6px]">
          <div className="h-full w-full rounded-full border-2 border-white bg-[#4a7fd0]" />
        </div>
      </div>
      <div className="ml-[5px] flex h-full w-[40px] items-center justify-center border-b-2 border-[#7cb6e3]">
        <div className="flex h-[23px] w-[21px] items-center justify-center border border-[#8fb4dc] bg-[#0a1f3d] font-['Liberation_Sans',sans-serif] text-[11px] font-bold text-[#7fb3e6]">Ps</div>
      </div>
      <div className="ml-auto flex items-center gap-[8px] pr-[12px]">
        <ChevronUp size={16} />
        <Bell size={15} fill="#9fb7c9" color="#9fb7c9" />
        <svg width="16" height="12" viewBox="0 0 16 12">
          <rect x="1" y="1" width="13" height="10" fill="#dfe9f2" />
          <rect x="14" y="4" width="2" height="4" fill="#dfe9f2" />
          <rect x="3" y="3" width="6" height="6" fill="#004073" />
        </svg>
        <Wifi size={16} className="-rotate-[45deg]" />
        <Volume2 size={17} />
        <svg width="16" height="17" viewBox="0 0 16 17">
          <path d="M0 0h16v13h-5l-3 3v-3H0z" fill="white" />
          <path d="M3 3h10M3 6h10M3 9h7" stroke="#004073" />
        </svg>
        <div className="flex w-[56px] flex-col items-center text-[12px] leading-[17px]">
          <span>2:27 PM</span>
          <span>9/16/2015</span>
        </div>
      </div>
    </div>
  );
}

export default function App() {
  return (
    <div className="relative flex h-screen w-screen flex-col overflow-hidden font-['Open_Sans',sans-serif]">
      <div className="relative min-h-0 flex-1 bg-[linear-gradient(180deg,#108a9e_0,#1fa0ab_1%,#5fb6b6_30%,#c9d8d2_55%,#3f8a5a_80%,#0e5a2c_100%)]">
        <div className="absolute inset-x-0 top-0 h-[12px] bg-[linear-gradient(90deg,#0f7f92,#1b9ba8_25%,#27a5ae_55%,#1b8ea4_100%)]" />
        <div className="absolute left-[399px] top-[8px] h-px w-[44px] bg-[#c65ad6]" />
        <div className="absolute left-[475px] top-[8px] h-px w-[44px] bg-[#c65ad6]" />
        <div className="absolute left-[551px] top-[8px] h-px w-[44px] bg-[#7cb0e8]" />
        <div className="absolute left-[635px] top-[8px] h-px w-[33px] bg-white" />
        <div className="absolute left-[778px] top-[8px] h-px w-[47px] bg-[#c0181c]" />
        <div className="absolute bottom-0 left-[959px] right-0 h-[14px] bg-[linear-gradient(90deg,#c7a94f,#dcc679_20%,#d4b95a_40%,#8f9d86_41%,#7ea39a_50%,#a8a070_52%,#c9a94e_70%,#8a7a35_78%,#3e7a2c_84%,#6a9a3a_100%)]" />
      </div>
      <Taskbar />
      <PhotoshopWindow />
      <ChromeWindow />
    </div>
  );
}
